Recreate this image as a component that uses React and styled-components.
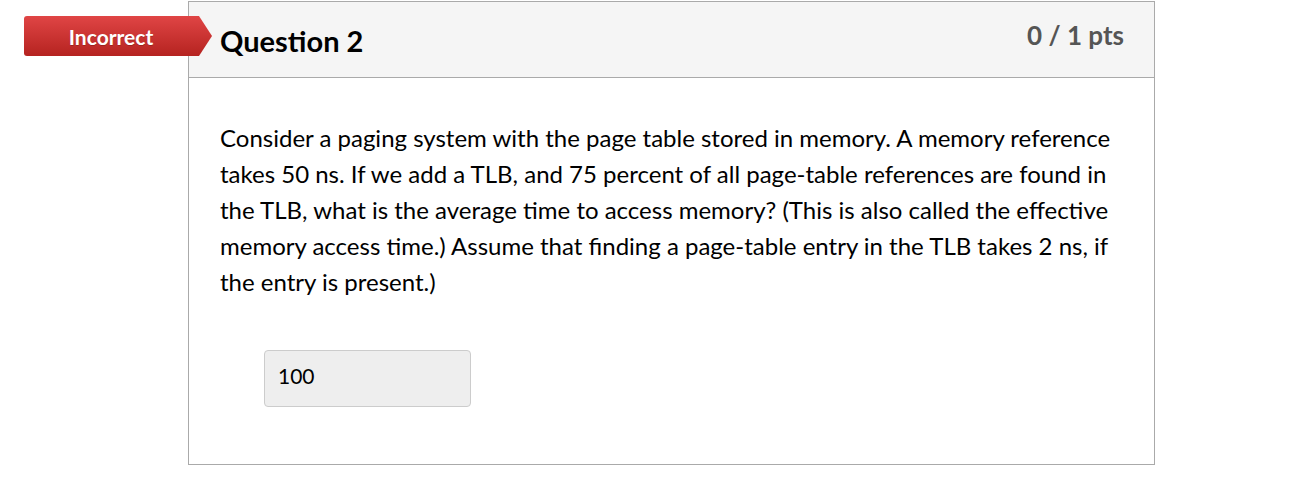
import React from "react";
import styled, { createGlobalStyle } from "styled-components";

const GlobalStyle = createGlobalStyle`
  html, body {
    margin: 0;
    padding: 0;
    background: #fff;
    font-family: Lato, "Open Sans", sans-serif;
    color: #000;
  }
`;

const Page = styled.div`
  padding: 1px 0 0 188px;
`;

const Card = styled.div`
  position: relative;
  border: 1px solid #aaa;
  box-sizing: border-box;
  width: 967px;
`;

const Header = styled.div`
  height: 76px;
  background: #f5f5f5;
  border-bottom: 1px solid #aaa;
  display: flex;
  justify-content: space-between;
  align-items: flex-start;
  padding: 0 30px 0 31px;
  box-sizing: border-box;
`;

const Title = styled.h2`
  margin: 21px 0 0;
  font-size: 29px;
  font-weight: 700;
  line-height: 36px;
`;

const Points = styled.div`
  margin-top: 17px;
  font-size: 26px;
  font-weight: 700;
  color: #555;
  line-height: 32px;
`;

const Badge = styled.div`
  position: absolute;
  left: -165px;
  top: 14px;
  width: 188px;
  height: 40px;
  display: flex;
  align-items: center;
  justify-content: center;
  padding-right: 14px;
  box-sizing: border-box;
  color: #fff;
  font-size: 21px;
  font-weight: 700;
  background: linear-gradient(#e04545, #b52320);
  clip-path: polygon(0 0, 175px 0, 188px 50%, 175px 100%, 0 100%);
  border-radius: 3px 0 0 3px;
  text-shadow: 0 1px 0 rgba(0, 0, 0, 0.2);
`;

const Body = styled.div`
  padding: 42px 32px 57px 31px;
`;

const Text = styled.p`
  margin: 0;
  width: 900px;
  font-size: 24px;
  line-height: 36px;
`;

const Answer = styled.div`
  margin: 50px 0 0 44px;
  width: 207px;
  height: 57px;
  background: #eee;
  border: 1px solid #ccc;
  border-radius: 4px;
  box-sizing: border-box;
  display: flex;
  align-items: center;
  padding: 0 0 6px 13px;
  font-size: 21px;
`;

export default function App() {
  return (
    <Page>
      <GlobalStyle />
      <Card>
        <Badge>Incorrect</Badge>
        <Header>
          <Title>Question 2</Title>
          <Points>0 / 1 pts</Points>
        </Header>
        <Body>
          <Text>
            Consider a paging system with the page table stored in memory. A memory reference
            takes 50 ns. If we add a TLB, and 75 percent of all page-table references are found in
            the TLB, what is the average time to access memory? (This is also called the effective
            memory access time.) Assume that finding a page-table entry in the TLB takes 2 ns, if
            the entry is present.)
          </Text>
          <Answer>100</Answer>
        </Body>
      </Card>
    </Page>
  );
}
